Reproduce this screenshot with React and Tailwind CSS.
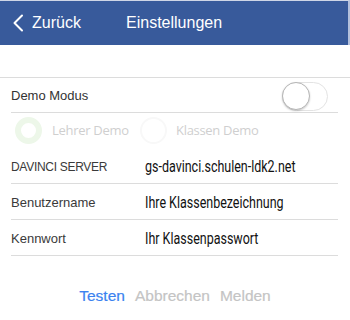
import React from "react";

const Row = ({ label, value, upper }) => (
  <div className="h-[36px] ml-[11px] mr-[12px] border-b border-[#dcdcdc] flex items-center pt-[2px]">
    <span
      className={
        "w-[134px] shrink-0 text-[#3a3a3a] " +
        (upper ? "text-[12px] tracking-[-0.3px]" : "text-[13px]")
      }
    >
      {label}
    </span>
    <span className="inline-block whitespace-nowrap origin-left scale-x-[0.78] text-[16px] text-[#111] [font-family:'Roboto',sans-serif]">
      {value}
    </span>
  </div>
);

const App = () => {
  return (
    <div className="w-[350px] h-[320px] bg-white overflow-hidden [font-family:'Liberation_Sans',Arial,sans-serif]">
      <div className="h-[45px] bg-[#385a9b] border-t border-[#cfd6e6] border-r-2 border-r-[#b3c0dc] flex items-center text-white">
        <div className="flex items-center pl-[12px] w-[126px]">
          <svg width="12" height="18" viewBox="0 0 12 18" fill="none">
            <path d="M10 1.5 L2.5 9 L10 16.5" stroke="white" strokeWidth="2" strokeLinecap="round" strokeLinejoin="round" />
          </svg>
          <span className="ml-[8px] text-[16px]">Zurück</span>
        </div>
        <span className="text-[16px]">Einstellungen</span>
      </div>

      <div className="h-[32px]" />
      <div className="border-t border-[#dcdcdc]">
        <div className="h-[35px] ml-[11px] mr-[12px] border-b border-[#dcdcdc] flex items-center justify-between pt-[2px]">
          <span className="text-[13px] text-[#333]">Demo Modus</span>
          <div className="w-[46px] h-[29px] rounded-full border border-[#e3e3e3] mr-[10px] relative">
            <div className="w-[28px] h-[28px] rounded-full bg-white border border-[#b5b5b5] shadow-[0_1px_2px_rgba(0,0,0,0.2)] absolute left-[-1px] top-[-1px]" />
          </div>
        </div>

        <div className="h-[35px] pl-[15px] flex items-center whitespace-nowrap text-[13px] text-[#cfcfcf] [font-family:'Open_Sans',sans-serif]">
          <div className="w-[27px] h-[27px] shrink-0 rounded-full border-[6px] border-[#edf7e9]" />
          <span className="ml-[10px] w-[88px] shrink-0 tracking-[-0.3px]">Lehrer Demo</span>
          <div className="w-[27px] h-[27px] shrink-0 rounded-full border-[2px] border-[#f8f8f8]" />
          <span className="ml-[9px] tracking-[-0.3px]">Klassen Demo</span>
        </div>

        <Row label="DAVINCI SERVER" value="gs-davinci.schulen-ldk2.net" upper />
        <Row label="Benutzername" value="Ihre Klassenbezeichnung" />
        <Row label="Kennwort" value="Ihr Klassenpasswort" />

        <div className="flex justify-center gap-[10px] mt-[28px] text-[15.5px] [-webkit-text-stroke:0.2px]">
          <span className="text-[#3b82f0]">Testen</span>
          <span className="text-[#c4c4c4]">Abbrechen</span>
          <span className="text-[#c4c4c4]">Melden</span>
        </div>
      </div>
    </div>
  );
};

export default App;
